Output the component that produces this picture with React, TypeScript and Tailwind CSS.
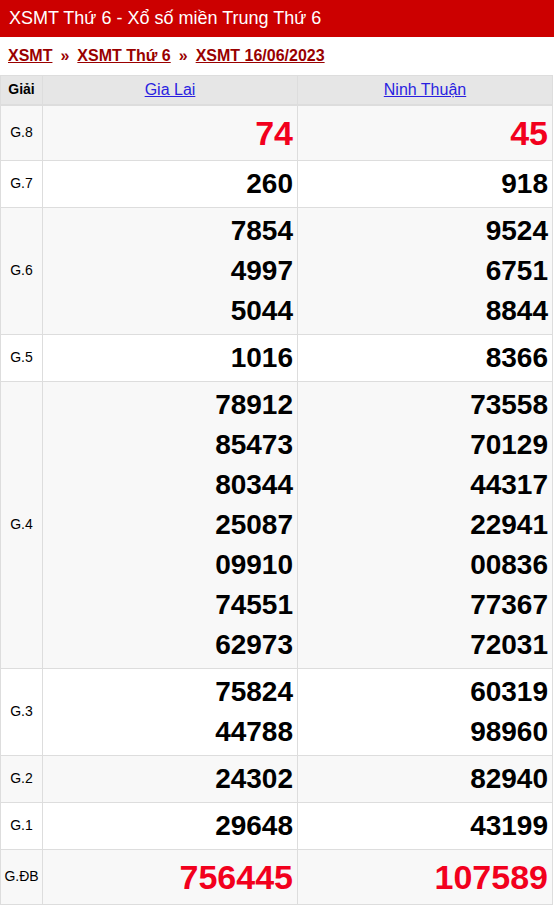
const gia = "Gia Lai";
const ninh = "Ninh Thuận";

type Row = { label: string; a: string[]; b: string[]; big?: boolean };

const rows: Row[] = [
  { label: "G.8", a: ["74"], b: ["45"], big: true },
  { label: "G.7", a: ["260"], b: ["918"] },
  { label: "G.6", a: ["7854", "4997", "5044"], b: ["9524", "6751", "8844"] },
  { label: "G.5", a: ["1016"], b: ["8366"] },
  {
    label: "G.4",
    a: ["78912", "85473", "80344", "25087", "09910", "74551", "62973"],
    b: ["73558", "70129", "44317", "22941", "00836", "77367", "72031"],
  },
  { label: "G.3", a: ["75824", "44788"], b: ["60319", "98960"] },
  { label: "G.2", a: ["24302"], b: ["82940"] },
  { label: "G.1", a: ["29648"], b: ["43199"] },
  { label: "G.ĐB", a: ["756445"], b: ["107589"], big: true },
];

function Cell({ nums, big }: { nums: string[]; big?: boolean }) {
  return (
    <td className="border border-[#dddddd] py-[3px] pr-[4px] pl-[3px] text-right align-middle">
      {nums.map((n, i) => (
        <div
          key={i}
          className={
            big
              ? "text-[34px] leading-[48px] font-bold text-[#f2001d]"
              : "text-[28px] leading-[40px] font-bold text-black"
          }
        >
          {n}
        </div>
      ))}
    </td>
  );
}

export default function App() {
  return (
    <div className="w-[554px] bg-white font-['Liberation_Sans',Arial,sans-serif]">
      <div className="h-[37px] bg-[#cc0000] pl-[9px] text-[18px] leading-[37px] text-white">
        XSMT Thứ 6 - Xổ số miền Trung Thứ 6
      </div>
      <div className="flex h-[38px] items-center gap-[8px] pl-[8px] text-[16px] font-bold text-[#990000]">
        <a className="underline">XSMT</a>
        <span>»</span>
        <a className="underline">XSMT Thứ 6</a>
        <span>»</span>
        <a className="underline">XSMT 16/06/2023</a>
      </div>
      <table className="w-[552px] table-fixed border-collapse">
        <colgroup>
          <col className="w-[42px]" />
          <col className="w-[255px]" />
          <col className="w-[255px]" />
        </colgroup>
        <thead>
          <tr className="bg-[#e6e6e6]">
            <th className="h-[29px] border border-b-2 border-[#dddddd] text-[14px] font-bold text-black">Giải</th>
            <th className="h-[29px] border border-b-2 border-[#dddddd] text-[16px] font-normal">
              <a className="text-[#2a1fe0] underline">{gia}</a>
            </th>
            <th className="h-[29px] border border-b-2 border-[#dddddd] text-[16px] font-normal">
              <a className="text-[#2a1fe0] underline">{ninh}</a>
            </th>
          </tr>
        </thead>
        <tbody>
          {rows.map((r, i) => (
            <tr key={r.label} className={i % 2 === 0 ? "bg-[#f8f8f8]" : "bg-white"}>
              <td className="border border-[#dddddd] text-center text-[14px] text-black">{r.label}</td>
              <Cell nums={r.a} big={r.big} />
              <Cell nums={r.b} big={r.big} />
            </tr>
          ))}
        </tbody>
      </table>
    </div>
  );
}
